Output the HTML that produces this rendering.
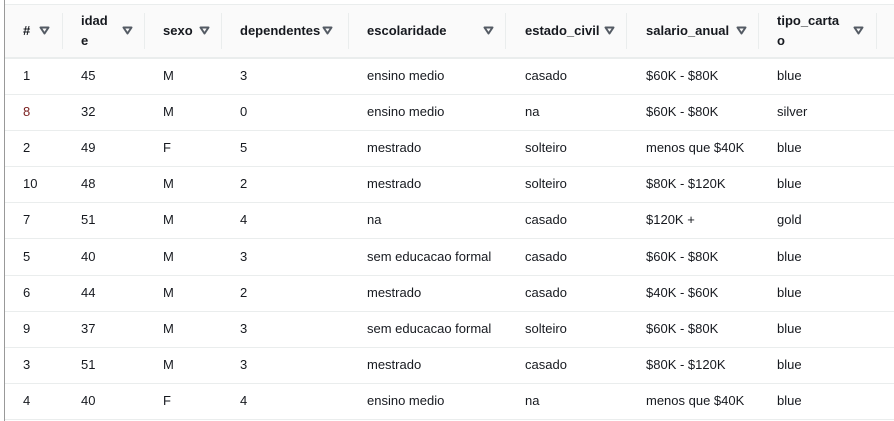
<!DOCTYPE html><html><head><style>
body{margin:0;width:894px;height:421px;background:#fff;font-family:"Liberation Sans",sans-serif;font-size:13px;color:#16191f;position:relative;overflow:hidden}
.lb{position:absolute;left:4px;top:0;width:1px;height:421px;background:#999}
.tl{position:absolute;left:5px;top:4px;right:0;height:1px;background:#eaeded}
.hd{position:absolute;left:5px;top:5px;right:0;height:52px;background:#fafafa;border-bottom:2px solid #eaeded}
.h{position:absolute;font-weight:bold;line-height:20px}
.tri{position:absolute;top:21px;width:11px;height:9px}
.dv{position:absolute;top:8px;width:1px;height:36px;background:#eaeded}
.row{position:absolute;left:5px;right:0;height:35px;border-bottom:1px solid #eaeded}
.c{position:absolute;top:9px;white-space:nowrap}
</style></head><body>
<div class="lb"></div><div class="tl"></div>
<div class="hd" id="hd">
<div class="h" style="left:18px;top:16px">#</div><div class="dv" style="left:57px"></div>
<div class="h" style="left:76px;top:6px">idad<br>e</div><div class="dv" style="left:139px"></div>
<div class="h" style="left:158px;top:16px">sexo</div><div class="dv" style="left:216px"></div>
<div class="h" style="left:235px;top:16px">dependentes</div><div class="dv" style="left:343px"></div>
<div class="h" style="left:362px;top:16px">escolaridade</div><div class="dv" style="left:500px"></div>
<div class="h" style="left:520px;top:16px">estado_civil</div><div class="dv" style="left:621px"></div>
<div class="h" style="left:641px;top:16px">salario_anual</div><div class="dv" style="left:753px"></div>
<div class="h" style="left:772px;top:6px">tipo_carta<br>o</div><div class="dv" style="left:871px"></div>
</div>
<div id="rows"></div>
<script>
var tx=[34,117,194,317,478,599,731,848],t="";
tx.forEach(function(x){t+='<svg class="tri" style="left:'+x+'px" viewBox="0 0 11 9"><path d="M1.5 1.5h8l-4 6z" fill="none" stroke="#545b64" stroke-width="2" stroke-linejoin="round"/></svg>'});
document.getElementById('hd').insertAdjacentHTML('beforeend',t);
var d=[["1","45","M","3","ensino medio","casado","$60K - $80K","blue"],["8","32","M","0","ensino medio","na","$60K - $80K","silver"],["2","49","F","5","mestrado","solteiro","menos que $40K","blue"],["10","48","M","2","mestrado","solteiro","$80K - $120K","blue"],["7","51","M","4","na","casado","$120K +","gold"],["5","40","M","3","sem educacao formal","casado","$60K - $80K","blue"],["6","44","M","2","mestrado","casado","$40K - $60K","blue"],["9","37","M","3","sem educacao formal","solteiro","$60K - $80K","blue"],["3","51","M","3","mestrado","casado","$80K - $120K","blue"],["4","40","F","4","ensino medio","na","menos que $40K","blue"]];
var xs=[18,76,158,235,362,520,641,772],h="";
d.forEach(function(r,i){h+='<div class="row" style="top:'+(59+i*36.1)+'px">';r.forEach(function(v,j){h+='<div class="c" style="left:'+xs[j]+'px'+(j==0&&v=="8"?';color:#7a1f1f':'')+'">'+v+'</div>'});h+='</div>'});
document.getElementById('rows').innerHTML=h;
</script>
</body></html>
